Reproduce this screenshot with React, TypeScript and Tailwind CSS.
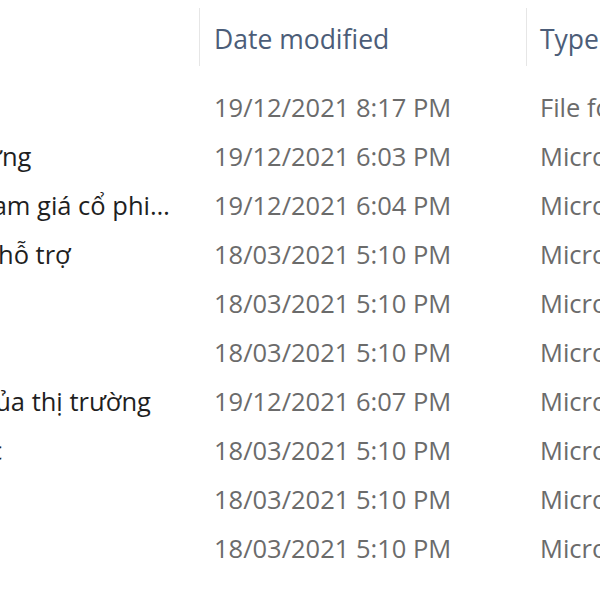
import React from "react";

const rows = [
  { name: "", nameCls: "", date: "19/12/2021 8:17 PM", type: "File folder" },
  { name: "ứng", nameCls: "-ml-[15px]", date: "19/12/2021 6:03 PM", type: "Microsoft Word Document" },
  { name: "nam giá cổ phi…", nameCls: "-ml-[23px]", date: "19/12/2021 6:04 PM", type: "Microsoft Word Document" },
  { name: "hỗ trợ", nameCls: "-ml-[2px]", date: "18/03/2021 5:10 PM", type: "Microsoft Word Document" },
  { name: "", nameCls: "", date: "18/03/2021 5:10 PM", type: "Microsoft Word Document" },
  { name: "", nameCls: "", date: "18/03/2021 5:10 PM", type: "Microsoft Word Document" },
  { name: "của thị trường", nameCls: "-ml-[17px]", date: "19/12/2021 6:07 PM", type: "Microsoft Word Document" },
  { name: "c", nameCls: "-ml-[10px]", date: "18/03/2021 5:10 PM", type: "Microsoft Word Document" },
  { name: "", nameCls: "", date: "18/03/2021 5:10 PM", type: "Microsoft Word Document" },
  { name: "", nameCls: "", date: "18/03/2021 5:10 PM", type: "Microsoft Word Document" },
];

export default function App() {
  return (
    <div
      className="w-[600px] h-[600px] overflow-hidden bg-white"
      style={{ fontFamily: '"Open Sans", "Noto Sans", sans-serif' }}
    >
      <div className="flex h-[58px] mt-[8px] text-[26.5px] text-[#4c5d78] whitespace-nowrap">
        <div className="w-[199px] shrink-0" />
        <div className="w-px shrink-0 bg-[#e6e6e6]" />
        <div className="w-[326px] shrink-0 pl-[14px] flex items-center pt-[6px]">Date modified</div>
        <div className="w-px shrink-0 bg-[#e6e6e6]" />
        <div className="pl-[13px] flex items-center pt-[6px]">Type</div>
      </div>
      <div className="mt-[17px] flex flex-col text-[25.5px] whitespace-nowrap">
        {rows.map((r, i) => (
          <div key={i} className="flex h-[49px] items-center">
            <div className="w-[200px] shrink-0 overflow-hidden text-[#1f1f1f]">
              <span className={`block ${r.nameCls}`}>{r.name || "\u00a0"}</span>
            </div>
            <div className="w-[326px] shrink-0 pl-[14px] text-[#6b6b6b]">{r.date}</div>
            <div className="pl-[14px] text-[#6b6b6b]">{r.type}</div>
          </div>
        ))}
      </div>
    </div>
  );
}
